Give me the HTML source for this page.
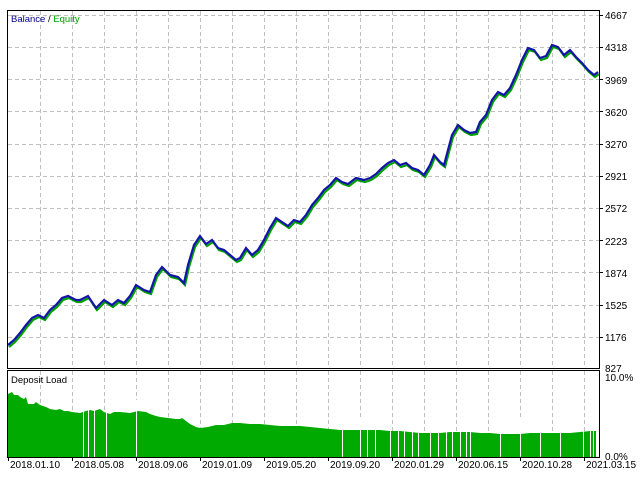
<!DOCTYPE html>
<html><head><style>
html,body{margin:0;padding:0;background:#fff;}
svg{display:block;font-family:"Liberation Sans",sans-serif;}
</style></head><body>
<svg width="640" height="480" viewBox="0 0 640 480" xmlns="http://www.w3.org/2000/svg">
<rect width="640" height="480" fill="#fff"/>
<g stroke="#c0c0c0" stroke-width="1" stroke-dasharray="4,3">
<line x1="40.5" y1="11" x2="40.5" y2="368"/><line x1="72.5" y1="11" x2="72.5" y2="368"/><line x1="104.5" y1="11" x2="104.5" y2="368"/><line x1="136.5" y1="11" x2="136.5" y2="368"/><line x1="168.5" y1="11" x2="168.5" y2="368"/><line x1="200.5" y1="11" x2="200.5" y2="368"/><line x1="232.5" y1="11" x2="232.5" y2="368"/><line x1="264.5" y1="11" x2="264.5" y2="368"/><line x1="296.5" y1="11" x2="296.5" y2="368"/><line x1="328.5" y1="11" x2="328.5" y2="368"/><line x1="360.5" y1="11" x2="360.5" y2="368"/><line x1="392.5" y1="11" x2="392.5" y2="368"/><line x1="424.5" y1="11" x2="424.5" y2="368"/><line x1="456.5" y1="11" x2="456.5" y2="368"/><line x1="488.5" y1="11" x2="488.5" y2="368"/><line x1="520.5" y1="11" x2="520.5" y2="368"/><line x1="552.5" y1="11" x2="552.5" y2="368"/><line x1="584.5" y1="11" x2="584.5" y2="368"/>
<line x1="40.5" y1="371" x2="40.5" y2="457"/><line x1="72.5" y1="371" x2="72.5" y2="457"/><line x1="104.5" y1="371" x2="104.5" y2="457"/><line x1="136.5" y1="371" x2="136.5" y2="457"/><line x1="168.5" y1="371" x2="168.5" y2="457"/><line x1="200.5" y1="371" x2="200.5" y2="457"/><line x1="232.5" y1="371" x2="232.5" y2="457"/><line x1="264.5" y1="371" x2="264.5" y2="457"/><line x1="296.5" y1="371" x2="296.5" y2="457"/><line x1="328.5" y1="371" x2="328.5" y2="457"/><line x1="360.5" y1="371" x2="360.5" y2="457"/><line x1="392.5" y1="371" x2="392.5" y2="457"/><line x1="424.5" y1="371" x2="424.5" y2="457"/><line x1="456.5" y1="371" x2="456.5" y2="457"/><line x1="488.5" y1="371" x2="488.5" y2="457"/><line x1="520.5" y1="371" x2="520.5" y2="457"/><line x1="552.5" y1="371" x2="552.5" y2="457"/><line x1="584.5" y1="371" x2="584.5" y2="457"/>
<line x1="8" y1="47.5" x2="599" y2="47.5"/><line x1="8" y1="79.5" x2="599" y2="79.5"/><line x1="8" y1="111.5" x2="599" y2="111.5"/><line x1="8" y1="144.5" x2="599" y2="144.5"/><line x1="8" y1="176.5" x2="599" y2="176.5"/><line x1="8" y1="208.5" x2="599" y2="208.5"/><line x1="8" y1="240.5" x2="599" y2="240.5"/><line x1="8" y1="272.5" x2="599" y2="272.5"/><line x1="8" y1="305.5" x2="599" y2="305.5"/><line x1="8" y1="337.5" x2="599" y2="337.5"/><line x1="8" y1="15.5" x2="599" y2="15.5"/>
</g>
<polygon fill="#00aa00" points="8,457 8,394 12,392 14,395 18,395 20,397 24,399 26,397 28,404 34,404 36,402 40,405 46,407 50,409 56,410 60,409 64,411 68,411 72,412 80,413 86,411 90,410 94,411 100,409 104,412 110,414 114,412 120,412 130,413 138,411 146,412 150,414 156,416 160,417 168,418 176,419 180,419 182,418 186,421 190,424 196,427 200,428 208,427 216,425 224,425 232,423 240,423 250,424 260,424 270,425 280,426 290,426 300,426 310,427 320,428 330,429 340,430 350,430 360,430 370,430 380,430 390,431 400,431 410,432 420,433 430,433 440,433 450,432 460,432 470,432 480,433 490,433 500,434 510,434 520,434 530,433 540,433 550,433 560,433 570,433 580,432 590,431 596,431 596,457"/>
<g stroke="#fff" stroke-width="1">
<line x1="83.5" y1="400" x2="83.5" y2="457"/><line x1="88.5" y1="400" x2="88.5" y2="457"/><line x1="94.5" y1="400" x2="94.5" y2="457"/><line x1="106.5" y1="400" x2="106.5" y2="457"/><line x1="136.5" y1="400" x2="136.5" y2="457"/>
<line x1="342.5" y1="420" x2="342.5" y2="457"/><line x1="360.5" y1="420" x2="360.5" y2="457"/><line x1="367.5" y1="420" x2="367.5" y2="457"/><line x1="375.5" y1="420" x2="375.5" y2="457"/><line x1="390.5" y1="420" x2="390.5" y2="457"/><line x1="398.5" y1="420" x2="398.5" y2="457"/><line x1="404.5" y1="420" x2="404.5" y2="457"/><line x1="412.5" y1="420" x2="412.5" y2="457"/><line x1="418.5" y1="420" x2="418.5" y2="457"/>
<line x1="430.5" y1="420" x2="430.5" y2="457"/><line x1="438.5" y1="420" x2="438.5" y2="457"/><line x1="446.5" y1="420" x2="446.5" y2="457"/><line x1="452.5" y1="420" x2="452.5" y2="457"/><line x1="460.5" y1="420" x2="460.5" y2="457"/><line x1="466.5" y1="420" x2="466.5" y2="457"/><line x1="470.5" y1="420" x2="470.5" y2="457"/><line x1="500.5" y1="420" x2="500.5" y2="457"/><line x1="520.5" y1="420" x2="520.5" y2="457"/><line x1="540.5" y1="420" x2="540.5" y2="457"/><line x1="560.5" y1="420" x2="560.5" y2="457"/><line x1="583.5" y1="420" x2="583.5" y2="457"/><line x1="590.5" y1="420" x2="590.5" y2="457"/><line x1="593.5" y1="420" x2="593.5" y2="457"/>
</g>
<polyline fill="none" stroke="#00a000" stroke-width="2.2" points="8,345 14,340 20,333 26,325 32,318 38,315 44,318 50,310 56,305 62,298 68,296 76,300 80,300 88,296 96,308 104,300 112,305 118,300 124,303 130,296 136,285 144,290 150,292 156,275 162,267 170,275 178,277 184,283 188,265 194,245 200,236 206,244 212,240 218,248 224,250 230,255 236,260 240,258 246,248 252,255 258,250 264,240 270,228 276,218 282,222 288,226 294,220 300,222 306,215 312,205 318,198 324,190 330,185 336,178 342,182 348,184 356,178 364,180 370,178 376,174 382,168 388,163 394,160 400,165 406,163 412,168 418,170 424,175 430,165 434,155 440,162 444,165 448,150 452,135 458,125 464,130 470,133 476,132 480,122 486,115 492,100 498,92 504,95 510,88 516,75 522,60 528,48 534,50 540,58 546,56 552,45 558,47 564,55 570,50 576,57 582,63 588,70 594,75 598,72" transform="translate(1,2)"/>
<polyline fill="none" stroke="#1414a8" stroke-width="2.2" points="8,345 14,340 20,333 26,325 32,318 38,315 44,318 50,310 56,305 62,298 68,296 76,300 80,300 88,296 96,308 104,300 112,305 118,300 124,303 130,296 136,285 144,290 150,292 156,275 162,267 170,275 178,277 184,283 188,265 194,245 200,236 206,244 212,240 218,248 224,250 230,255 236,260 240,258 246,248 252,255 258,250 264,240 270,228 276,218 282,222 288,226 294,220 300,222 306,215 312,205 318,198 324,190 330,185 336,178 342,182 348,184 356,178 364,180 370,178 376,174 382,168 388,163 394,160 400,165 406,163 412,168 418,170 424,175 430,165 434,155 440,162 444,165 448,150 452,135 458,125 464,130 470,133 476,132 480,122 486,115 492,100 498,92 504,95 510,88 516,75 522,60 528,48 534,50 540,58 546,56 552,45 558,47 564,55 570,50 576,57 582,63 588,70 594,75 598,72"/>
<g fill="none" stroke="#000" stroke-width="1">
<rect x="7.5" y="10.5" width="592" height="358"/>
<rect x="7.5" y="370.5" width="592" height="87"/>
</g>
<g stroke="#000">
<line x1="599" y1="15.5" x2="603" y2="15.5"/><line x1="599" y1="47.5" x2="603" y2="47.5"/><line x1="599" y1="79.5" x2="603" y2="79.5"/><line x1="599" y1="111.5" x2="603" y2="111.5"/><line x1="599" y1="144.5" x2="603" y2="144.5"/><line x1="599" y1="176.5" x2="603" y2="176.5"/><line x1="599" y1="208.5" x2="603" y2="208.5"/><line x1="599" y1="240.5" x2="603" y2="240.5"/><line x1="599" y1="272.5" x2="603" y2="272.5"/><line x1="599" y1="305.5" x2="603" y2="305.5"/><line x1="599" y1="337.5" x2="603" y2="337.5"/>
<line x1="8.5" y1="457" x2="8.5" y2="461"/><line x1="72.5" y1="457" x2="72.5" y2="461"/><line x1="136.5" y1="457" x2="136.5" y2="461"/><line x1="200.5" y1="457" x2="200.5" y2="461"/><line x1="264.5" y1="457" x2="264.5" y2="461"/><line x1="328.5" y1="457" x2="328.5" y2="461"/><line x1="392.5" y1="457" x2="392.5" y2="461"/><line x1="456.5" y1="457" x2="456.5" y2="461"/><line x1="520.5" y1="457" x2="520.5" y2="461"/><line x1="584.5" y1="457" x2="584.5" y2="461"/>
</g>
<g font-size="10" fill="#000">
<text x="605" y="19">4667</text><text x="605" y="51">4318</text><text x="605" y="84">3969</text><text x="605" y="116">3620</text><text x="605" y="148">3270</text><text x="605" y="180">2921</text><text x="605" y="212">2572</text><text x="605" y="245">2223</text><text x="605" y="277">1874</text><text x="605" y="309">1525</text><text x="605" y="341">1176</text><text x="605" y="372">827</text>
<text x="605" y="381">10.0%</text><text x="605" y="460">0.0%</text>
<text x="10" y="468">2018.01.10</text><text x="74" y="468">2018.05.08</text><text x="138" y="468">2018.09.06</text><text x="202" y="468">2019.01.09</text><text x="266" y="468">2019.05.20</text><text x="330" y="468">2019.09.20</text><text x="394" y="468">2020.01.29</text><text x="458" y="468">2020.06.15</text><text x="522" y="468">2020.10.28</text><text x="586" y="468">2021.03.15</text>
<text x="11" y="383" font-size="9.5">Deposit Load</text>
<text x="11" y="22" font-size="9.5"><tspan fill="#00008b">Balance</tspan><tspan fill="#000"> / </tspan><tspan fill="#00a000">Equity</tspan></text>
</g>
</svg>
</body></html>
